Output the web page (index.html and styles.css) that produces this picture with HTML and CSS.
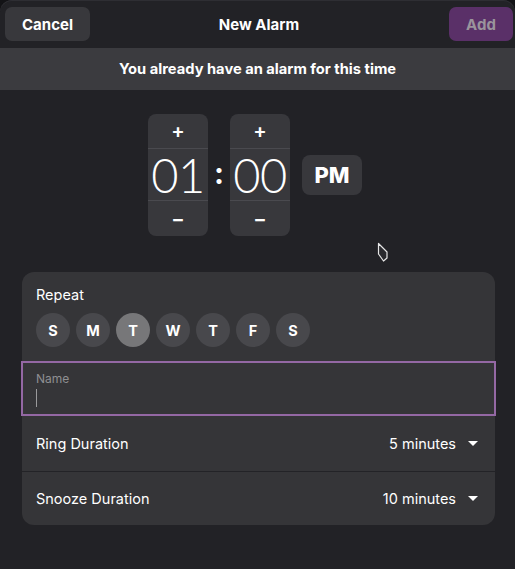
FILE: index.html
```html
<!DOCTYPE html>
<html lang="en">
<head>
<meta charset="utf-8">
<title>New Alarm</title>
<link rel="stylesheet" href="styles.css">
</head>
<body>
<div class="window">
  <header class="headerbar">
    <div class="hb-start"><button class="btn btn-cancel">Cancel</button></div>
    <div class="title">New Alarm</div>
    <div class="hb-end"><button class="btn btn-add">Add</button></div>
  </header>
  <div class="banner">You already have an alarm for this time</div>

  <div class="picker">
    <div class="spin">
      <div class="spin-btn">+</div>
      <div class="spin-val">01</div>
      <div class="spin-btn">&minus;</div>
    </div>
    <div class="colon">:</div>
    <div class="spin">
      <div class="spin-btn">+</div>
      <div class="spin-val">00</div>
      <div class="spin-btn">&minus;</div>
    </div>
    <button class="ampm">PM</button>
  </div>

  <div class="card">
    <div class="repeat">
      <div class="repeat-label">Repeat</div>
      <div class="days">
        <span class="day">S</span>
        <span class="day">M</span>
        <span class="day active">T</span>
        <span class="day">W</span>
        <span class="day">T</span>
        <span class="day">F</span>
        <span class="day">S</span>
      </div>
    </div>
    <div class="name-row">
      <div class="name-label">Name</div>
      <div class="caret"></div>
    </div>
    <div class="combo-row sep">
      <span class="combo-title">Ring Duration</span>
      <span class="combo-value">5 minutes<span class="arrow"></span></span>
    </div>
    <div class="combo-row">
      <span class="combo-title">Snooze Duration</span>
      <span class="combo-value">10 minutes<span class="arrow"></span></span>
    </div>
  </div>

  <svg class="pointer" width="12" height="21" viewBox="0 0 12 21">
    <path d="M1.5 1.5 L1.5 12 L6.5 19 L10 16 L10 10 Z" fill="#2a2a2e" stroke="#e6e6e6" stroke-width="1.2" stroke-linejoin="round"/>
  </svg>
</div>
</body>
</html>
```

FILE: styles.css
```css
* { box-sizing: border-box; }
html, body { margin: 0; padding: 0; }
body {
  background: #131316;
  font-family: Inter, "Noto Sans", sans-serif;
  color: #ffffff;
  width: 515px;
  height: 569px;
  overflow: hidden;
}
.window {
  position: relative;
  width: 515px;
  height: 569px;
  background: #222226;
  border-radius: 12px 12px 0 0;
  box-shadow: inset 0 1px 0 #2e2e33;
}
.headerbar {
  height: 48px;
  display: grid;
  grid-template-columns: 1fr auto 1fr;
  align-items: center;
  padding: 0 2px 0 5px;
}
.hb-start { justify-self: start; }
.hb-end { justify-self: end; }
.title {
  font-weight: 700;
  font-size: 15px;
}
.btn {
  height: 34px;
  border: none;
  border-radius: 7px;
  font-family: inherit;
  font-weight: 700;
  font-size: 15px;
  padding: 0;
}
.btn-cancel {
  width: 85px;
  background: #38383c;
  color: #ffffff;
}
.btn-add {
  width: 64px;
  background: #5a3068;
  color: #9a949c;
}
.banner {
  height: 42px;
  background: #3b3b3f;
  display: flex;
  align-items: center;
  justify-content: center;
  font-weight: 700;
  font-size: 14.7px;
  padding-bottom: 1px;
}
.picker {
  display: flex;
  align-items: center;
  justify-content: center;
  margin: 24px 5px 0 0;
}
.spin {
  width: 60px;
  height: 122px;
  background: #38383c;
  border-radius: 8px;
  display: flex;
  flex-direction: column;
}
.spin-btn {
  height: 34px;
  display: flex;
  align-items: center;
  justify-content: center;
  font-size: 20px;
  font-weight: 600;
}
.spin-btn:last-child { height: 35px; }
.spin-val {
  height: 53px;
  border-top: 1px solid #4a4a4f;
  border-bottom: 1px solid #4a4a4f;
  display: flex;
  align-items: center;
  justify-content: center;
  font-family: Lato, Inter, sans-serif;
  font-weight: 300;
  font-size: 47px;
  letter-spacing: -0.5px;
}
.colon {
  width: 22px;
  text-align: center;
  font-size: 30px;
  font-weight: 700;
  margin-top: -4px;
}
.ampm {
  margin-left: 12px;
  width: 60px;
  height: 40px;
  border: none;
  border-radius: 8px;
  background: #38383c;
  color: #ffffff;
  font-family: inherit;
  font-weight: 800;
  font-size: 22px;
  padding: 0;
}
.card {
  margin: 36px 20px 0 22px;
  background: #353538;
  border-radius: 12px;
}
.repeat {
  padding: 13px 14px 0;
}
.repeat-label {
  font-size: 14.5px;
  line-height: 20px;
}
.days {
  display: flex;
  gap: 6px;
  margin-top: 8px;
}
.day {
  width: 34px;
  height: 34px;
  border-radius: 50%;
  background: #48484c;
  display: flex;
  align-items: center;
  justify-content: center;
  font-weight: 700;
  font-size: 14.5px;
}
.day.active { background: #777779; }
.name-row {
  margin: 14px -1px 0;
  height: 55px;
  border: 2px solid #9468a4;
  padding: 8px 13px 0;
}
.name-label {
  font-size: 12px;
  color: #8f8f92;
  line-height: 16px;
}
.caret {
  width: 1px;
  height: 18px;
  background: #9a9a9c;
  margin-top: 2px;
}
.combo-row {
  height: 53px;
  display: flex;
  align-items: center;
  justify-content: space-between;
  padding: 0 17px 0 14px;
  font-size: 14.5px;
}
.combo-row.sep {
  height: 56px;
  border-bottom: 1px solid #232327;
}
.combo-value {
  display: flex;
  align-items: center;
}
.arrow {
  width: 0;
  height: 0;
  margin-left: 12px;
  border-left: 5px solid transparent;
  border-right: 5px solid transparent;
  border-top: 5px solid #ffffff;
}
.pointer {
  position: absolute;
  left: 377px;
  top: 242px;
}
```
